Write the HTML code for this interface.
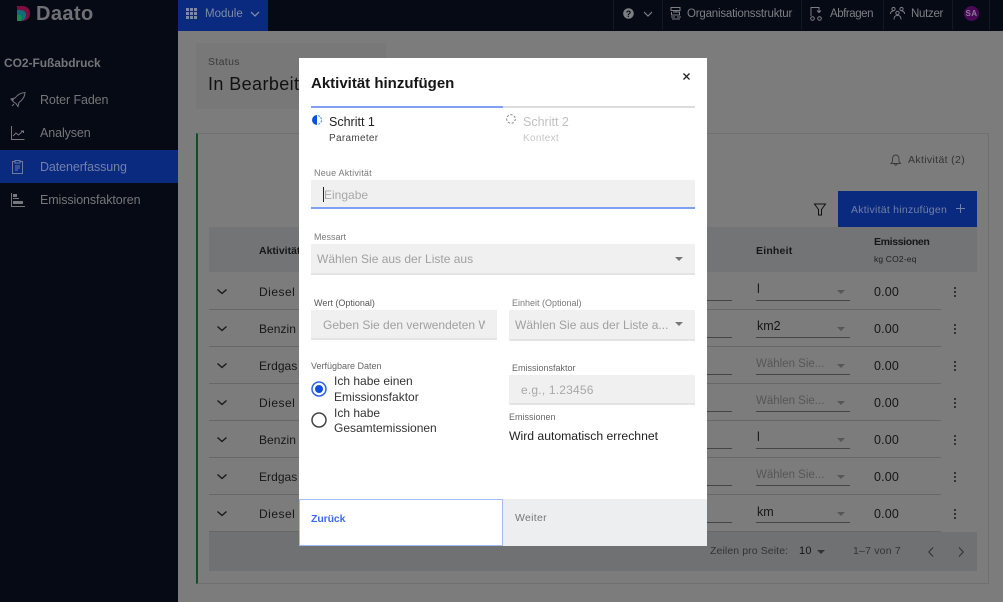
<!DOCTYPE html>
<html lang="de"><head><meta charset="utf-8"><title>Daato</title>
<style>
html,body{margin:0;padding:0;width:1003px;height:602px;overflow:hidden;background:#7c7c7c;font-family:"Liberation Sans",sans-serif}
.a{position:absolute;white-space:nowrap}
svg{position:absolute;overflow:visible}
.nav{color:#7d7f83;font-size:11.5px;letter-spacing:-.2px}
.side{color:#74767a;font-size:12.5px;left:40px;letter-spacing:-.1px}
.sep{position:absolute;left:209px;width:732px;height:1px;background:#676767}
.act{left:259px;font-size:12px;color:#171717;letter-spacing:.05px}
.ul{position:absolute;height:1px;background:#454545}
.val{left:874px;font-size:12.5px;color:#161616;letter-spacing:.15px}
.unit{left:757px;font-size:12.5px;color:#161616}
.ph{left:756px;font-size:11.5px;color:#565656}
.tri{position:absolute;width:0;height:0;border-left:4.5px solid transparent;border-right:4.5px solid transparent;border-top:4.5px solid #565656}
.keb{position:absolute;left:954px;width:2.4px;height:2.4px;background:#333;box-shadow:0 4px 0 #333,0 8px 0 #333}
.lbl{font-size:9px;color:#7b7b7b}
.fld{position:absolute;background:#f0f0f0;border-bottom:2px solid #e4e4e4;box-sizing:border-box}
.ph2{font-size:12px;color:#a8a8a8}
.mt{font-size:12px;color:#333}
.mtri{position:absolute;width:0;height:0;border-left:4.5px solid transparent;border-right:4.5px solid transparent;border-top:4.5px solid #777}
</style></head><body>

<!-- header -->
<div class="a" style="left:0;top:0;width:1003px;height:31px;background:#050a14"></div>
<div class="a" style="left:178px;top:0;width:90px;height:31px;background:#0a2a80"></div>
<svg style="left:17px;top:5px" width="14" height="17" viewBox="0 0 14 17"><path d="M0 1h5c5 0 8 3 8 7.500s-3 7.500-8 7.500H0z" fill="#7c0f3e"/><path d="M0 5h3c4 0 6 2 6 5 0 3-2 6-6 6H0z" fill="#0f6e78"/><path d="M0 10h3c2 0 2 3 1 6H0z" fill="#1a8a4a"/></svg>
<div class="a" style="left:36px;top:3px;font-size:20px;font-weight:bold;color:#6f7175;letter-spacing:.4px">Daato</div>
<svg style="left:186px;top:8px" width="11" height="11" fill="#7f8aa8"><path d="M0 0h3v3H0zM4 0h3v3H4zM8 0h3v3H8zM0 4h3v3H0zM4 4h3v3H4zM8 4h3v3H8zM0 8h3v3H0zM4 8h3v3H4zM8 8h3v3H8z"/></svg>
<div class="a nav" style="left:205px;top:8px;color:#7f8aa8;letter-spacing:0">Module</div>
<svg style="left:250px;top:11px" width="10" height="6" fill="none" stroke="#7f8aa8" stroke-width="1.300"><path d="M1 1l4 4 4-4"/></svg>

<div class="a" style="left:613px;top:0;width:1px;height:30px;background:#15191f"></div>
<div class="a" style="left:662px;top:0;width:1px;height:30px;background:#15191f"></div>
<div class="a" style="left:801px;top:0;width:1px;height:30px;background:#15191f"></div>
<div class="a" style="left:883px;top:0;width:1px;height:30px;background:#15191f"></div>
<div class="a" style="left:952px;top:0;width:1px;height:30px;background:#15191f"></div>
<div class="a" style="left:989px;top:0;width:1px;height:30px;background:#15191f"></div>
<svg style="left:623px;top:8px" width="11" height="11"><circle cx="5.500" cy="5.500" r="5.300" fill="#7d7f83"/><text x="5.500" y="8.800" font-size="9" font-weight="bold" text-anchor="middle" fill="#050a14" font-family="Liberation Sans">?</text></svg>
<svg style="left:643px;top:11px" width="10" height="6" fill="none" stroke="#7d7f83" stroke-width="1.200"><path d="M1 1l4 4 4-4"/></svg>
<svg style="left:670px;top:7px" width="12" height="13" fill="none" stroke="#7d7f83" stroke-width="1"><path d="M1 .5h9v3H1zM6 3.500V5M3 5h7M1.500 5v3h8V5M1 10h4M7 10h4M2 12h8"/></svg>
<div class="a nav" style="left:687px;top:8px">Organisationsstruktur</div>
<svg style="left:810px;top:7px" width="13" height="14" fill="none" stroke="#7d7f83" stroke-width="1"><path d="M1 9V.5h8V5M7 3.500L9 5.500l2-2"/><circle cx="2.500" cy="11.500" r="1.800"/><circle cx="9.500" cy="11.500" r="1.800"/></svg>
<div class="a nav" style="left:830px;top:8px;letter-spacing:-.45px">Abfragen</div>
<svg style="left:890px;top:7px" width="15" height="13" fill="none" stroke="#7d7f83" stroke-width="1"><circle cx="3.500" cy="2" r="1.600"/><circle cx="11.500" cy="2" r="1.600"/><circle cx="7.500" cy="6" r="1.700"/><path d="M.5 7c0-2 1-3 3-3M14.500 7c0-2-1-3-3-3M4 12.500c0-3 1-4 3.500-4s3.500 1 3.500 4"/></svg>
<div class="a nav" style="left:911px;top:8px;letter-spacing:-.3px">Nutzer</div>
<div class="a" style="left:964px;top:6px;width:15px;height:15px;border-radius:50%;background:#4a0a58;color:#8d7d96;font-size:8px;font-weight:bold;line-height:15px;text-align:center;letter-spacing:.5px">SA</div>

<!-- sidebar -->
<div class="a" style="left:0;top:31px;width:178px;height:571px;background:#050a14"></div>
<div class="a" style="left:0;top:150px;width:178px;height:33px;background:#0a2a80"></div>
<div class="a" style="left:4px;top:56px;font-size:12px;font-weight:bold;color:#74767a;letter-spacing:-.05px">CO2-Fußabdruck</div>
<svg style="left:10px;top:92px" width="16" height="15" fill="none" stroke="#75777b" stroke-width="1"><path d="M1 7l4-1C8 2 11 1 15 .5c0 4-2 7-6 10l-1 4-2-3-2.500-1.500zM1 7l3 1M4 12l-2 2"/></svg>
<svg style="left:11px;top:126px" width="14" height="14" fill="none" stroke="#75777b" stroke-width="1"><path d="M.5 0v13.500H13.500M2 10l3-3 2.500 2L12 5M10 5h2.500v2"/></svg>
<svg style="left:12px;top:160px" width="12" height="14" fill="none" stroke="#6f7a9c" stroke-width="1"><path d="M3 1.500H.5v12h10v-12H8M3 .5h5v2.500H3zM3 6h5M3 8h5M3 10h3"/></svg>
<svg style="left:11px;top:193px" width="14" height="14" fill="#75777b"><path d="M0 0h1v13h13v1H0zM2 1h4v3H2zM2 5h6v1H2zM2 8h10v3H2z"/></svg>
<div class="a side" style="top:93px">Roter Faden</div>
<div class="a side" style="top:126px">Analysen</div>
<div class="a side" style="top:160px;color:#7380a6">Datenerfassung</div>
<div class="a side" style="top:193px">Emissionsfaktoren</div>

<!-- main -->
<div class="a" style="left:196px;top:43px;width:190px;height:66px;background:#787878"></div>
<div class="a" style="left:208px;top:56px;font-size:10.500px;color:#3a3a3a;letter-spacing:.35px">Status</div>
<div class="a" style="left:208px;top:74px;font-size:18px;color:#111;letter-spacing:.4px">In Bearbeit</div>

<div class="a" style="left:196px;top:133px;width:793px;height:451px;box-sizing:border-box;border:1px solid #707070;border-left:2px solid #0d4f26"></div>
<svg style="left:890px;top:154px" width="12" height="12" fill="none" stroke="#3a3a3a" stroke-width=".9"><path d="M1 9.500h9.500L9 7.500V4.500C9 2.500 7.500 1 5.800 1S2.500 2.500 2.500 4.500v3zM4.500 10c0 1.500 2.500 1.500 2.500 0"/></svg>
<div class="a" style="left:908px;top:154px;font-size:10.500px;color:#333;letter-spacing:.35px">Aktivität (2)</div>
<svg style="left:814px;top:203px" width="13" height="13" fill="none" stroke="#111" stroke-width="1"><path d="M.5 1h11L7.500 6.500V12h-3V6.500z"/></svg>
<div class="a" style="left:838px;top:191px;width:139px;height:36px;background:#0a2a80"></div>
<div class="a" style="left:851px;top:204px;font-size:10.500px;color:#7380a6;letter-spacing:.25px">Aktivität hinzufügen</div>
<svg style="left:956px;top:204px" width="9" height="9" stroke="#7380a6" stroke-width="1"><path d="M4.500 0v9M0 4.500h9"/></svg>

<div class="a" style="left:209px;top:227px;width:768px;height:45px;background:#727476"></div>
<div class="a" style="left:259px;top:245px;font-size:10.500px;font-weight:bold;color:#161616">Aktivität</div>
<div class="a" style="left:756px;top:245px;font-size:10.500px;font-weight:bold;color:#161616;letter-spacing:.2px">Einheit</div>
<div class="a" style="left:874px;top:236px;font-size:10.500px;font-weight:bold;color:#161616;letter-spacing:-.35px">Emissionen</div>
<div class="a" style="left:874px;top:254px;font-size:8.500px;color:#222;letter-spacing:.15px">kg CO2-eq</div>

<div class="sep" style="top:309px"></div><div class="sep" style="top:346px"></div><div class="sep" style="top:383px"></div><div class="sep" style="top:420px"></div><div class="sep" style="top:457px"></div><div class="sep" style="top:494px"></div><div class="sep" style="top:531px"></div>

<svg style="left:217px;top:289px" width="10" height="5" fill="none" stroke="#161616" stroke-width="1.300"><path d="M.5.500l4.500 4 4.500-4"/></svg>
<svg style="left:217px;top:326px" width="10" height="5" fill="none" stroke="#161616" stroke-width="1.300"><path d="M.5.500l4.500 4 4.500-4"/></svg>
<svg style="left:217px;top:363px" width="10" height="5" fill="none" stroke="#161616" stroke-width="1.300"><path d="M.5.500l4.500 4 4.500-4"/></svg>
<svg style="left:217px;top:400px" width="10" height="5" fill="none" stroke="#161616" stroke-width="1.300"><path d="M.5.500l4.500 4 4.500-4"/></svg>
<svg style="left:217px;top:437px" width="10" height="5" fill="none" stroke="#161616" stroke-width="1.300"><path d="M.5.500l4.500 4 4.500-4"/></svg>
<svg style="left:217px;top:474px" width="10" height="5" fill="none" stroke="#161616" stroke-width="1.300"><path d="M.5.500l4.500 4 4.500-4"/></svg>
<svg style="left:217px;top:511px" width="10" height="5" fill="none" stroke="#161616" stroke-width="1.300"><path d="M.5.500l4.500 4 4.500-4"/></svg>

<div class="a act" style="top:285px;letter-spacing:.5px">Diesel</div>
<div class="a act" style="top:322px">Benzin</div>
<div class="a act" style="top:359px">Erdgas</div>
<div class="a act" style="top:396px;letter-spacing:.5px">Diesel</div>
<div class="a act" style="top:433px">Benzin</div>
<div class="a act" style="top:470px">Erdgas</div>
<div class="a act" style="top:507px;letter-spacing:.5px">Diesel b</div>

<div class="ul" style="left:700px;width:32px;top:300px"></div><div class="ul" style="left:700px;width:32px;top:337px"></div><div class="ul" style="left:700px;width:32px;top:374px"></div><div class="ul" style="left:700px;width:32px;top:411px"></div><div class="ul" style="left:700px;width:32px;top:448px"></div><div class="ul" style="left:700px;width:32px;top:485px"></div><div class="ul" style="left:700px;width:32px;top:522px"></div>
<div class="ul" style="left:756px;width:94px;top:300px"></div><div class="ul" style="left:756px;width:94px;top:337px"></div><div class="ul" style="left:756px;width:94px;top:374px"></div><div class="ul" style="left:756px;width:94px;top:411px"></div><div class="ul" style="left:756px;width:94px;top:448px"></div><div class="ul" style="left:756px;width:94px;top:485px"></div><div class="ul" style="left:756px;width:94px;top:522px"></div>

<div class="a unit" style="top:282px">l</div>
<div class="a unit" style="top:319px">km2</div>
<div class="a ph" style="top:358px">Wählen Sie...</div>
<div class="a ph" style="top:395px">Wählen Sie...</div>
<div class="a unit" style="top:430px">l</div>
<div class="a ph" style="top:469px">Wählen Sie...</div>
<div class="a unit" style="top:505px">km</div>

<div class="tri" style="left:837px;top:290px"></div><div class="tri" style="left:837px;top:327px"></div><div class="tri" style="left:837px;top:364px"></div><div class="tri" style="left:837px;top:401px"></div><div class="tri" style="left:837px;top:438px"></div><div class="tri" style="left:837px;top:475px"></div><div class="tri" style="left:837px;top:512px"></div>

<div class="a val" style="top:285px">0.00</div><div class="a val" style="top:322px">0.00</div><div class="a val" style="top:359px">0.00</div><div class="a val" style="top:396px">0.00</div><div class="a val" style="top:433px">0.00</div><div class="a val" style="top:470px">0.00</div><div class="a val" style="top:507px">0.00</div>

<div class="keb" style="top:287px"></div><div class="keb" style="top:324px"></div><div class="keb" style="top:361px"></div><div class="keb" style="top:398px"></div><div class="keb" style="top:435px"></div><div class="keb" style="top:472px"></div><div class="keb" style="top:509px"></div>

<div class="a" style="left:209px;top:532px;width:768px;height:39px;background:#6f7173"></div>
<div class="a" style="left:710px;top:545px;font-size:10.500px;color:#333;letter-spacing:.1px">Zeilen pro Seite:</div>
<div class="a" style="left:799px;top:545px;font-size:11px;color:#161616;letter-spacing:.3px">10</div>
<div class="tri" style="left:817px;top:550px;border-top-color:#333"></div>
<div class="a" style="left:853px;top:545px;font-size:10.500px;color:#333;letter-spacing:.2px">1–7 von 7</div>
<svg style="left:928px;top:547px" width="6" height="10" fill="none" stroke="#333" stroke-width="1.100"><path d="M5 .5L.8 5 5 9.500"/></svg>
<svg style="left:958px;top:547px" width="6" height="10" fill="none" stroke="#333" stroke-width="1.100"><path d="M1 .5L5.200 5 1 9.500"/></svg>

<!-- modal -->
<div class="a" style="left:299px;top:58px;width:408px;height:488px;background:#fff"></div>
<div class="a" style="left:311px;top:75px;font-size:15px;font-weight:bold;color:#161616">Aktivität hinzufügen</div>
<svg style="left:683px;top:73px" width="7" height="7" stroke="#222" stroke-width="1.300"><path d="M.5.500l6 6M6.500.500l-6 6"/></svg>
<div class="a" style="left:311px;top:106px;width:192px;height:2px;background:#7f9ff5"></div>
<div class="a" style="left:503px;top:106px;width:192px;height:2px;background:#dcdcdc"></div>

<svg style="left:312px;top:115px" width="10" height="10"><path d="M5 0a5 5 0 0 0 0 10z" fill="#0f4fe0"/><path d="M6 .6A4.500 4.500 0 0 1 9.500 5 4.500 4.500 0 0 1 6 9.400" fill="none" stroke="#0f4fe0" stroke-width=".8" stroke-dasharray="2 1.200"/></svg>
<div class="a" style="left:329px;top:115px;font-size:12.500px;color:#222">Schritt 1</div>
<div class="a" style="left:329px;top:133px;font-size:10px;color:#444;letter-spacing:.3px">Parameter</div>
<svg style="left:506px;top:114px" width="10" height="10"><circle cx="5" cy="5" r="4.300" fill="none" stroke="#777" stroke-width=".9" stroke-dasharray="2.200 1.700"/></svg>
<div class="a" style="left:523px;top:115px;font-size:12.500px;color:#c0c0c0">Schritt 2</div>
<div class="a" style="left:523px;top:133px;font-size:10px;color:#c6c6c6;letter-spacing:.3px">Kontext</div>

<div class="a lbl" style="left:314px;top:168px;letter-spacing:.2px">Neue Aktivität</div>
<div class="fld" style="left:311px;top:180px;width:384px;height:29px;border-bottom:2px solid #7f9ff5"></div>
<div class="a" style="left:323px;top:187px;width:1px;height:15px;background:#222"></div>
<div class="a ph2" style="left:324px;top:188px">Eingabe</div>

<div class="a lbl" style="left:314px;top:232px">Messart</div>
<div class="fld" style="left:311px;top:244px;width:384px;height:31px"></div>
<div class="a ph2" style="left:317px;top:252px;color:#a0a0a0">Wählen Sie aus der Liste aus</div>
<div class="mtri" style="left:675px;top:257px"></div>

<div class="a lbl" style="left:314px;top:298px;color:#555">Wert (Optional)</div>
<div class="fld" style="left:311px;top:310px;width:186px;height:30px"></div>
<div class="a ph2" style="left:323px;top:318px;width:162px;overflow:hidden;color:#a0a0a0">Geben Sie den verwendeten Wert ein</div>
<div class="a lbl" style="left:512px;top:298px">Einheit (Optional)</div>
<div class="fld" style="left:509px;top:310px;width:186px;height:31px"></div>
<div class="a ph2" style="left:515px;top:318px;color:#a0a0a0">Wählen Sie aus der Liste a...</div>
<div class="mtri" style="left:675px;top:322px"></div>

<div class="a lbl" style="left:311px;top:361px;color:#666">Verfügbare Daten</div>
<svg style="left:311px;top:381px" width="16" height="16"><circle cx="8" cy="8" r="7" fill="none" stroke="#2f62ea" stroke-width="1.500"/><circle cx="8" cy="8" r="4" fill="#0f4fe0"/></svg>
<div class="a mt" style="left:334px;top:374px">Ich habe einen</div>
<div class="a mt" style="left:334px;top:390px">Emissionsfaktor</div>
<svg style="left:311px;top:412px" width="16" height="16"><circle cx="8" cy="8" r="7" fill="none" stroke="#444" stroke-width="1.500"/></svg>
<div class="a mt" style="left:334px;top:406px">Ich habe</div>
<div class="a mt" style="left:334px;top:421px">Gesamtemissionen</div>

<div class="a lbl" style="left:512px;top:363px;color:#666">Emissionsfaktor</div>
<div class="fld" style="left:509px;top:375px;width:186px;height:30px"></div>
<div class="a ph2" style="left:521px;top:383px;letter-spacing:.2px">e.g., 1.23456</div>
<div class="a lbl" style="left:509px;top:412px;color:#666">Emissionen</div>
<div class="a" style="left:509px;top:429px;font-size:12.200px;color:#222">Wird automatisch errechnet</div>

<div class="a" style="left:299px;top:499px;width:204px;height:47px;box-sizing:border-box;background:#fff;border:1px solid #a3bbf8"></div>
<div class="a" style="left:311px;top:513px;font-size:10.500px;font-weight:bold;color:#3a6cf0;letter-spacing:-.1px">Zurück</div>
<div class="a" style="left:503px;top:499px;width:204px;height:47px;background:#edeef0"></div>
<div class="a" style="left:515px;top:512px;font-size:10.500px;color:#757575;letter-spacing:.3px">Weiter</div>
</body></html>
